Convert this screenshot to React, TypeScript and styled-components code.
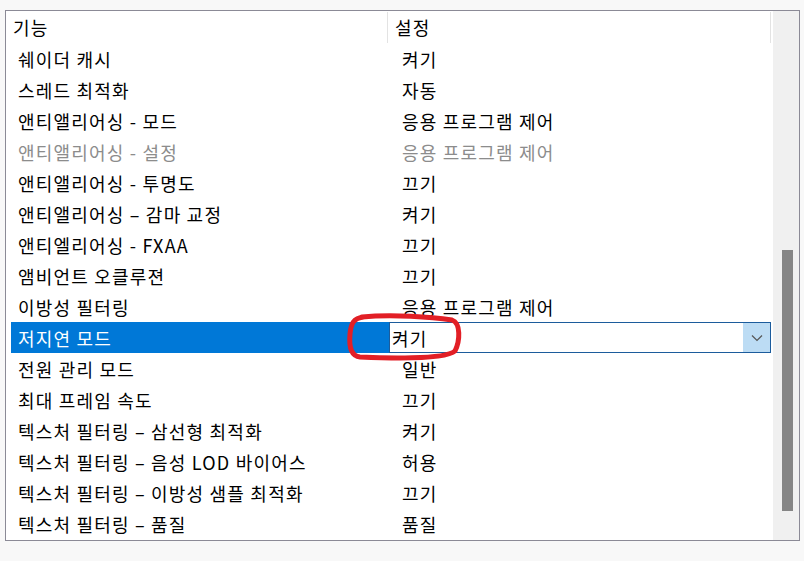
import React from "react";
import styled, { createGlobalStyle } from "styled-components";

const GlobalStyle = createGlobalStyle`
  html, body {
    margin: 0;
    padding: 0;
    background: #f8f8f8;
  }
  body {
    font-family: "Noto Sans CJK KR", "Noto Sans", sans-serif;
    font-size: 18px;
    letter-spacing: 1.2px;
    color: #000;
  }
`;

interface Setting {
  name: string;
  value: string;
  disabled?: boolean;
  selected?: boolean;
}

const settings: Setting[] = [
  { name: "쉐이더 캐시", value: "켜기" },
  { name: "스레드 최적화", value: "자동" },
  { name: "앤티앨리어싱 - 모드", value: "응용 프로그램 제어" },
  { name: "앤티앨리어싱 - 설정", value: "응용 프로그램 제어", disabled: true },
  { name: "앤티앨리어싱 - 투명도", value: "끄기" },
  { name: "앤티앨리어싱 – 감마 교정", value: "켜기" },
  { name: "앤티엘리어싱 - FXAA", value: "끄기" },
  { name: "앰비언트 오클루젼", value: "끄기" },
  { name: "이방성 필터링", value: "응용 프로그램 제어" },
  { name: "저지연 모드", value: "켜기", selected: true },
  { name: "전원 관리 모드", value: "일반" },
  { name: "최대 프레임 속도", value: "끄기" },
  { name: "텍스처 필터링 – 삼선형 최적화", value: "켜기" },
  { name: "텍스처 필터링 – 음성 LOD 바이어스", value: "허용" },
  { name: "텍스처 필터링 – 이방성 샘플 최적화", value: "끄기" },
  { name: "텍스처 필터링 – 품질", value: "품질" },
];

const Page = styled.div`
  position: relative;
  width: 804px;
  height: 561px;
  padding: 10px 0 0 5px;
  box-sizing: border-box;
`;

const Frame = styled.div`
  display: flex;
  width: 795px;
  height: 531px;
  box-sizing: border-box;
  border: 1px solid #8b8a96;
  background: #fff;
`;

const ListArea = styled.div`
  flex: 1;
  display: flex;
  flex-direction: column;
`;

const HeaderRow = styled.div`
  display: flex;
  height: 32px;
  padding-top: 1px;
  box-sizing: border-box;
`;

const HeaderCell = styled.div<{ $width?: number }>`
  ${(p) => (p.$width ? `width: ${p.$width}px;` : "flex: 1;")}
  display: flex;
  align-items: center;
  padding-left: 7px;
  box-sizing: border-box;
  border-right: 1px solid #e3e3e3;
  line-height: 1;
  padding-bottom: 2px;
`;

const HeaderTail = styled.div`
  width: 2px;
`;

const Row = styled.div<{ $disabled?: boolean }>`
  display: flex;
  height: 31px;
  margin-left: 5px;
  margin-right: 2px;
  color: ${(p) => (p.$disabled ? "#8c8c8c" : "#000")};
`;

const NameCell = styled.div<{ $selected?: boolean }>`
  width: 378px;
  display: flex;
  align-items: center;
  padding-left: 7px;
  box-sizing: border-box;
  white-space: nowrap;
  background: ${(p) => (p.$selected ? "#0078d7" : "transparent")};
  color: ${(p) => (p.$selected ? "#fff" : "inherit")};
`;

const ValueCell = styled.div`
  flex: 1;
  display: flex;
  align-items: center;
  padding-left: 13px;
  white-space: nowrap;
`;

const Combo = styled.div`
  flex: 1;
  display: flex;
  border: 1px solid #1c5c9c;
  box-sizing: border-box;
  background: #fff;
`;

const ComboText = styled.div`
  flex: 1;
  display: flex;
  align-items: center;
  padding-left: 2px;
`;

const ComboButton = styled.div`
  width: 27px;
  display: flex;
  align-items: center;
  justify-content: center;
  background: #bcdcf4;
`;

const ScrollTrack = styled.div`
  width: 26px;
  background: #f0f0f0;
  display: flex;
  flex-direction: column;
  align-items: center;
  padding-top: 239px;
  box-sizing: border-box;
`;

const ScrollThumb = styled.div`
  width: 11px;
  height: 261px;
  background: #858585;
  margin-left: 2px;
`;

const Annotation = styled.svg`
  position: absolute;
  left: 0;
  top: 0;
  pointer-events: none;
`;

export default function App() {
  return (
    <Page>
      <GlobalStyle />
      <Frame>
        <ListArea>
          <HeaderRow>
            <HeaderCell $width={382}>기능</HeaderCell>
            <HeaderCell>설정</HeaderCell>
            <HeaderTail />
          </HeaderRow>
          {settings.map((s) => (
            <Row key={s.name} $disabled={s.disabled}>
              <NameCell $selected={s.selected}>{s.name}</NameCell>
              {s.selected ? (
                <Combo>
                  <ComboText>{s.value}</ComboText>
                  <ComboButton>
                    <svg width="12" height="8" viewBox="0 0 12 8">
                      <path d="M1 1.5 L6 6.5 L11 1.5" fill="none" stroke="#555" strokeWidth="1.2" />
                    </svg>
                  </ComboButton>
                </Combo>
              ) : (
                <ValueCell>{s.value}</ValueCell>
              )}
            </Row>
          ))}
        </ListArea>
        <ScrollTrack>
          <ScrollThumb />
        </ScrollTrack>
      </Frame>
      <Annotation width="804" height="561" viewBox="0 0 804 561">
        <path
          d="M362 317 C392 314, 432 317, 452 320 C461 323, 460 341, 455 351 C445 360, 382 358, 360 357 C350 356, 349 345, 350 334 C351 324, 353 318, 364 317"
          fill="none"
          stroke="#e21f26"
          strokeWidth="5"
          strokeLinecap="round"
        />
      </Annotation>
    </Page>
  );
}
